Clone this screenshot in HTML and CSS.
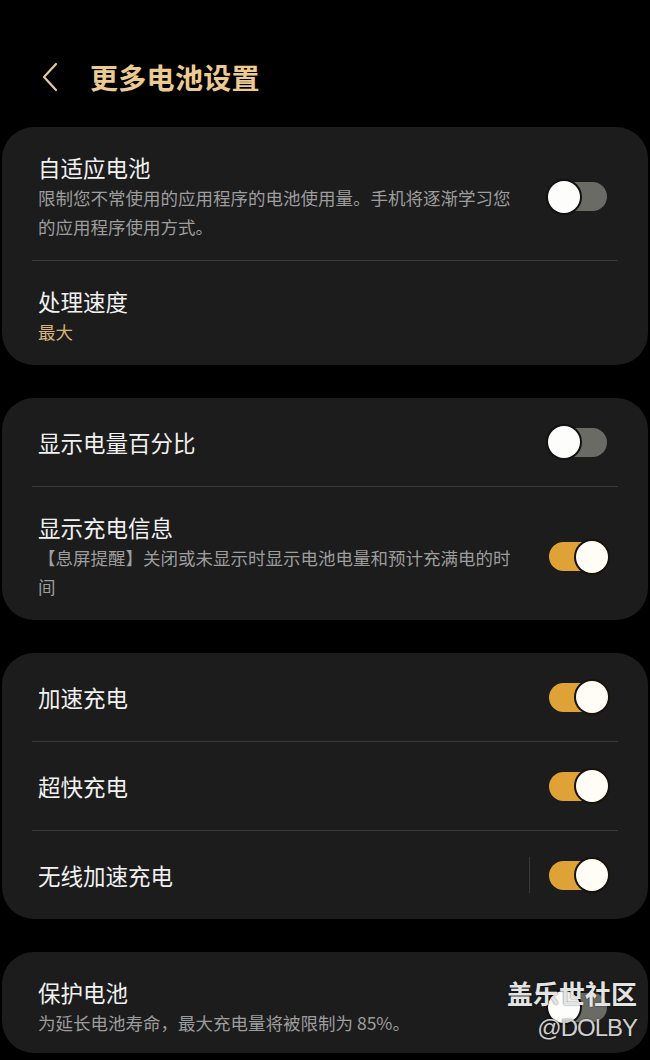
FILE: index.html
```html
<!DOCTYPE html>
<html lang="zh-CN">
<head>
  <meta charset="UTF-8" />
  <meta name="viewport" content="width=device-width, initial-scale=1.0"/>
  <title>更多电池设置</title>
  <link rel="stylesheet" href="styles.css">
</head>
<body>

  <div class="header">
    <svg class="back" width="20" height="30" viewBox="0 0 20 30">
      <polyline points="16,2 4,15 16,28" fill="none" stroke="#e3caa0" stroke-width="2.2" stroke-linecap="round" stroke-linejoin="round"/>
    </svg>
    <h1>更多电池设置</h1>
  </div>

  <div class="card">
    <div class="row sub">
      <div class="text">
        <div class="title">自适应电池</div>
        <div class="desc">限制您不常使用的应用程序的电池使用量。手机将逐渐学习您的应用程序使用方式。</div>
      </div>
      <div class="toggle"><span class="thumb"></span></div>
    </div>
    <div class="divider"></div>
    <div class="row sub">
      <div class="text">
        <div class="title">处理速度</div>
        <div class="desc gold">最大</div>
      </div>
    </div>
  </div>

  <div class="card">
    <div class="row">
      <div class="text">
        <div class="title">显示电量百分比</div>
      </div>
      <div class="toggle"><span class="thumb"></span></div>
    </div>
    <div class="divider"></div>
    <div class="row sub">
      <div class="text">
        <div class="title">显示充电信息</div>
        <div class="desc">【息屏提醒】关闭或未显示时显示电池电量和预计充满电的时间</div>
      </div>
      <div class="toggle on"><span class="thumb"></span></div>
    </div>
  </div>

  <div class="card">
    <div class="row">
      <div class="text">
        <div class="title">加速充电</div>
      </div>
      <div class="toggle on"><span class="thumb"></span></div>
    </div>
    <div class="divider"></div>
    <div class="row">
      <div class="text">
        <div class="title">超快充电</div>
      </div>
      <div class="toggle on"><span class="thumb"></span></div>
    </div>
    <div class="divider"></div>
    <div class="row">
      <div class="text">
        <div class="title">无线加速充电</div>
      </div>
      <span class="vline"></span>
      <div class="toggle on"><span class="thumb"></span></div>
    </div>
  </div>

  <div class="card">
    <div class="row sub last">
      <div class="text">
        <div class="title">保护电池</div>
        <div class="desc">为延长电池寿命，最大充电量将被限制为 85%。</div>
      </div>
      <div class="toggle"><span class="thumb"></span></div>
    </div>
  </div>

  <div class="watermark">
    <div class="wm-name">盖乐世社区</div>
    <div class="wm-user">@DOLBY</div>
  </div>

</body>
</html>
```

FILE: styles.css
```css
body {
  background-color: #000;
  font-family: "Noto Sans CJK SC", "Noto Sans", sans-serif;
  margin: 0;
  padding: 0;
  width: 650px;
  height: 1060px;
  overflow: hidden;
  position: relative;
}

.header {
  display: flex;
  align-items: center;
  height: 34px;
  padding: 60px 0 33px 40px;
}

.back {
  margin-right: 30px;
}

h1 {
  margin: 0;
  font-size: 28px;
  font-weight: 700;
  color: #eccb92;
  line-height: 34px;
  letter-spacing: 0.3px;
}

.card {
  background-color: #1c1c1c;
  margin: 0 2px 33px;
  border-radius: 32px;
}

.row {
  display: flex;
  align-items: center;
  min-height: 88px;
  padding: 0 41px 0 36px;
  box-sizing: border-box;
}

.row.sub {
  padding-top: 25px;
  padding-bottom: 19px;
}

.row.last {
  padding-bottom: 16px;
}

.text {
  flex: 1;
}

.title {
  font-size: 22.5px;
  line-height: 30px;
  color: #f1f1f1;
}

.desc {
  max-width: 482px;
  margin-top: 1px;
  font-size: 17.5px;
  line-height: 29px;
  color: #9d9d9d;
}

.desc.gold {
  color: #d8b67a;
}

.divider {
  height: 1px;
  margin: 0 30px;
  background-color: #3a3a3a;
}

.vline {
  width: 1px;
  height: 36px;
  margin-right: 19px;
  background-color: #383838;
}

/* Switch */
.toggle {
  display: flex;
  align-items: center;
  justify-content: flex-start;
  width: 58px;
  height: 29px;
  border-radius: 15px;
  background-color: #6b6b66;
}

.toggle.on {
  justify-content: flex-end;
  background-color: #dfa236;
}

.thumb {
  flex: none;
  width: 32px;
  height: 32px;
  margin: 0 -1px;
  border-radius: 50%;
  background-color: #fdfdfb;
  box-shadow: 0 0 0 2px #111;
}

.toggle.on .thumb {
  background-color: #fffdf6;
  box-shadow: 0 0 0 2px #17130c;
}

/* Watermark */
.watermark {
  position: absolute;
  top: 976px;
  right: 13px;
  text-align: right;
  text-shadow: 0 0 2px rgba(0, 0, 0, 0.6);
}

.wm-name {
  font-size: 26px;
  font-weight: 700;
  line-height: 34px;
  color: #e4e4e4;
}

.wm-user {
  margin-top: 4px;
  font-family: "Liberation Sans", sans-serif;
  font-size: 24px;
  font-weight: 400;
  line-height: 28px;
  letter-spacing: -1px;
  color: #cfcfcf;
}
```
